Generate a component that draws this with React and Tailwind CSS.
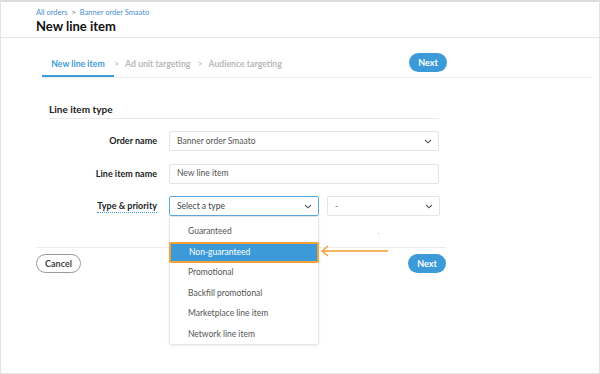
import React from "react";

const Chevron = ({ className = "" }) => (
  <svg width="8" height="5" viewBox="0 0 8 5" className={className}>
    <path d="M1 1 L4 3.8 L7 1" fill="none" stroke="#555" strokeWidth="1.1" />
  </svg>
);

function Field({ label, children, dotted }) {
  return (
    <div className="flex items-center">
      <div className="w-[108px] shrink-0 flex justify-end">
        <span
          className={
            "text-[9px] font-bold text-[#222] leading-[12px] " +
            (dotted ? "border-b border-dotted border-[#3b9bd8]" : "")
          }
        >
          {label}
        </span>
      </div>
      <div className="ml-[12px] flex-1 flex gap-[8px]">{children}</div>
    </div>
  );
}

export default function App() {
  const items = [
    "Guaranteed",
    "Non-guaranteed",
    "Promotional",
    "Backfill promotional",
    "Marketplace line item",
    "Network line item",
  ];
  return (
    <div
      className="w-[600px] h-[374px] bg-white border border-[#e3e3e3] border-t-2 border-t-[#dcdcdc] relative overflow-hidden"
      style={{ fontFamily: 'Lato, "Open Sans", sans-serif' }}
    >
      {/* header */}
      <div className="h-[36px] border-b border-[#e6e6e6] pl-[35px] pt-[6px]">
        <div className="text-[7.5px] leading-[10px] text-[#4a90d0] flex items-center gap-[4px]">
          <span>All orders</span>
          <span className="text-[#666]">&gt;</span>
          <span>Banner order Smaato</span>
        </div>
        <div className="text-[13px] leading-[16px] font-bold text-[#111]">New line item</div>
      </div>

      {/* tabs */}
      <div className="ml-[41px] mr-[6px] mt-[17px] flex items-end border-b border-[#ececec] h-[23px]">
        <div className="h-[23px] w-[72px] border-b-2 border-[#3b9bd8] flex justify-center">
          <span className="text-[8.7px] font-bold text-[#3b9bd8] leading-[12px] mt-[4px]">New line item</span>
        </div>
        <div className="h-[23px] flex items-start pt-[4px] text-[8.7px] leading-[12px] font-bold text-[#b8b8b8]">
          <span className="font-normal">&gt;</span>
          <span className="ml-[6px]">Ad unit targeting</span>
          <span className="ml-[7px] font-normal">&gt;</span>
          <span className="ml-[6px]">Audience targeting</span>
        </div>
        <div className="flex-1" />
        <div className="h-[23px] flex items-start mr-[146px]">
          <button className="w-[38px] h-[19px] -mt-[1px] rounded-full bg-[#3d9ad8] text-white text-[9px] font-bold leading-[19px]">
            Next
          </button>
        </div>
      </div>

      {/* form */}
      <div className="ml-[35px] w-[410px]">
        <div className="ml-[13px] mr-[7px] mt-[25px] text-[10px] font-bold text-[#222] leading-[13px] pb-[2px] border-b border-[#e9e9e9]">
          Line item type
        </div>
        <div className="ml-[13px] mr-[7px] mt-[12px] flex flex-col gap-[12.5px]">
          <Field label="Order name">
            <div className="h-[20px] flex-1 border border-[#e1e4e8] rounded-[2px] flex items-center justify-between pl-[7px] pr-[6px]">
              <span className="text-[8.5px] text-[#555]">Banner order Smaato</span>
              <Chevron />
            </div>
          </Field>
          <Field label="Line item name">
            <div className="h-[20px] flex-1 border border-[#e1e4e8] rounded-[2px] flex items-center pl-[7px]">
              <span className="text-[8.5px] text-[#555]">New line item</span>
            </div>
          </Field>
          <Field label="Type & priority" dotted>
            <div className="relative w-[150px] h-[20px]">
              <div className="h-[20px] w-full border border-[#5aa8de] rounded-[2px] flex items-center justify-between pl-[7px] pr-[6px]">
                <span className="text-[8.5px] text-[#444]">Select a type</span>
                <Chevron />
              </div>
              {/* dropdown */}
              <div className="absolute left-0 top-[20px] w-[150px] h-[129px] bg-white border border-[#e4e4e4] rounded-[3px] shadow-[0_1px_3px_rgba(0,0,0,0.08)] z-10 pt-[4px]">
                {items.map((it, i) =>
                  i === 1 ? (
                    <div
                      key={it}
                      className="h-[21px] -mx-[1px] bg-[#3d9ad8] border-2 border-[#f3a23a] rounded-[2px] flex items-center pl-[18px] text-[8.5px] text-white"
                    >
                      {it}
                    </div>
                  ) : (
                    <div key={it} className="h-[20.5px] flex items-center pl-[18px] text-[8.5px] text-[#555]">
                      {it}
                    </div>
                  )
                )}
              </div>
            </div>
            <div className="h-[20px] w-[113px] border border-[#e1e4e8] rounded-[2px] flex items-center justify-between pl-[7px] pr-[6px]">
              <span className="text-[8.5px] text-[#666]">-</span>
              <Chevron />
            </div>
          </Field>
        </div>
        <div className="relative mt-[31px] border-t border-[#ececec] pt-[6px] flex justify-between">
          <div className="absolute left-[342px] -top-[15px] w-[1px] h-[1px] bg-[#bbb]" />
          <button className="w-[45px] h-[19px] rounded-full border border-[#999] text-[9px] font-bold text-[#444] leading-[17px]">
            Cancel
          </button>
          <button className="w-[38px] h-[19px] rounded-full bg-[#3d9ad8] text-white text-[9px] font-bold leading-[19px]">
            Next
          </button>
        </div>
      </div>

      {/* orange arrow annotation */}
      <svg className="absolute left-[318px] top-[243px]" width="72" height="12" viewBox="0 0 72 12">
        <path d="M3 6 H69" stroke="#f39a2b" strokeWidth="1.3" fill="none" />
        <path d="M9 1 L3 6 L9 11" stroke="#f39a2b" strokeWidth="1.3" fill="none" />
      </svg>
    </div>
  );
}
